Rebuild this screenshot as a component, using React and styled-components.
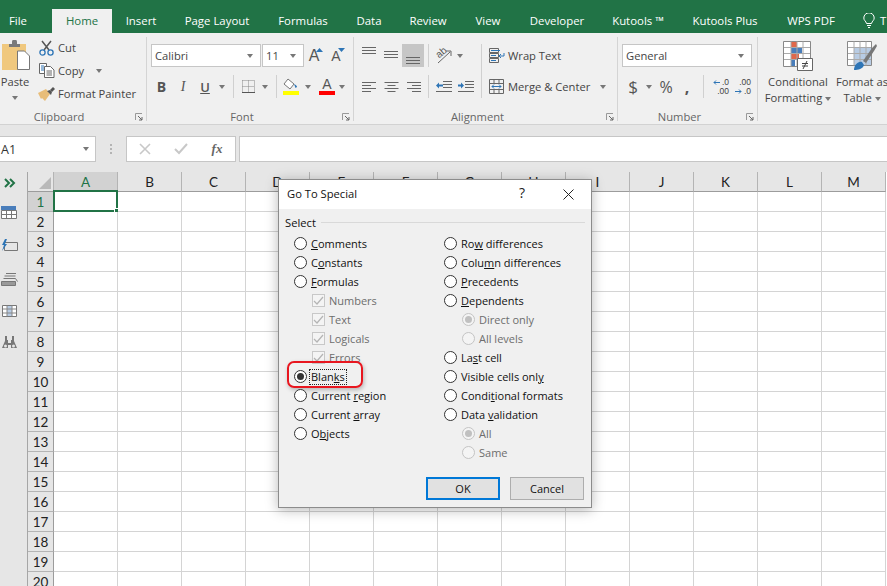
import { Fragment } from 'react';
import styled, { createGlobalStyle } from 'styled-components';

const GlobalStyle = createGlobalStyle`
	html, body {
		margin: 0;
		height: 100%;
		overflow: hidden;
		background: #fff;
	}
	body {
		font-family: 'Open Sans', 'Noto Sans', sans-serif;
		font-size: 11.2px;
		color: #444;
	}
`;

const Page = styled.div`
	width: 887px;
	height: 586px;
	position: relative;
	overflow: hidden;
`;

/* tabs */
const TabBar = styled.div`
	display: flex;
	height: 33px;
	background: #217346;
	white-space: nowrap;
`;
const Tab = styled.div`
	flex: none;
	width: ${(p) => p.$w}px;
	margin-top: 9px;
	display: flex;
	align-items: center;
	justify-content: ${(p) => (p.$start ? 'flex-start' : 'center')};
	padding: 0 ${(p) => p.$right ?? 0}px 1px ${(p) => p.$left ?? 0}px;
	box-sizing: border-box;
	color: ${(p) => (p.$active ? '#217346' : '#fff')};
	background: ${(p) => (p.$active ? '#f0f0f0' : 'transparent')};
	font-size: 11.4px;
`;

/* ribbon */
const Ribbon = styled.div`
	display: flex;
	height: 92px;
	box-sizing: border-box;
	padding-top: 4px;
	background: #f0f0f0;
	border-bottom: 1px solid #d2d2d2;
	overflow: hidden;
`;
const Group = styled.div`
	flex: none;
	position: relative;
	width: ${(p) => p.$w}px;
	height: 84px;
	box-sizing: border-box;
	border-right: ${(p) => (p.$last ? 'none' : '1px solid #d4d4d4')};
	padding: ${(p) => p.$top ?? 7}px 0 0 ${(p) => p.$left ?? 0}px;
	display: flex;
	flex-direction: column;
`;
const GroupBody = styled.div`
	display: flex;
`;
const GroupLabel = styled.div`
	margin-top: auto;
	margin-bottom: -4px;
	padding-right: ${(p) => p.$pad ?? 20}px;
	line-height: 16px;
	text-align: center;
	color: #666;
`;
const Launcher = styled.svg`
	position: absolute;
	right: 3px;
	bottom: 0;
	width: 8px;
	height: 8px;
`;
const Stack = styled.div`
	display: flex;
	flex-direction: column;
	gap: ${(p) => p.$gap ?? 8}px;
`;
const ToolRow = styled.div`
	display: flex;
	align-items: center;
	height: 23px;
`;
const Slot = styled.div`
	flex: none;
	width: ${(p) => p.$w}px;
	height: 23px;
	display: flex;
	align-items: center;
	justify-content: center;
	background: ${(p) => (p.$active ? '#c6c6c6' : 'transparent')};
	color: #555;
`;
const Divider = styled.div`
	width: 1px;
	height: ${(p) => p.$h ?? 23}px;
	background: #d0d0d0;
`;
const Combo = styled.div`
	flex: none;
	width: ${(p) => p.$w}px;
	height: 23px;
	box-sizing: border-box;
	margin-right: 1px;
	padding: 0 7px 0 3px;
	display: flex;
	align-items: center;
	justify-content: space-between;
	background: #fff;
	border: 1px solid #c6c6c6;
	color: #444;
`;
const Caret = styled.span`
	flex: none;
	display: inline-block;
	vertical-align: middle;
	width: 0;
	height: 0;
	border-left: 3.5px solid transparent;
	border-right: 3.5px solid transparent;
	border-top: 4px solid #777;
	margin-left: ${(p) => p.$gap ?? 0}px;
`;
const PasteColumn = styled.div`
	flex: none;
	width: 30px;
	display: flex;
	flex-direction: column;
	align-items: center;
	padding-top: 3px;
	color: #444;
`;
const PasteLabel = styled.div`
	margin: 3px 0 6px;
	line-height: 16px;
`;
const ClipRow = styled.div`
	display: flex;
	align-items: center;
	gap: 3px;
	height: 23px;
	color: #444;
	white-space: nowrap;
`;
const ClipIcon = styled.div`
	flex: none;
	width: 17px;
	display: flex;
	justify-content: center;
`;
const ClipColumn = styled.div`
	margin: -1px 0 0 8px;
`;
const WideTool = styled.div`
	display: flex;
	align-items: center;
	gap: 3px;
	height: 23px;
	color: #444;
	white-space: nowrap;
	padding-left: 7px;
`;
const BigTool = styled.div`
	flex: none;
	width: ${(p) => p.$w}px;
	display: flex;
	flex-direction: column;
	align-items: center;
	color: #444;
	line-height: 16px;
	white-space: nowrap;
`;
const BigIcon = styled.div`
	height: 36px;
	display: flex;
	align-items: center;
`;
const Big = styled.span`
	font-size: ${(p) => p.$size}px;
	font-weight: ${(p) => p.$weight ?? 400};
	font-style: ${(p) => (p.$italic ? 'italic' : 'normal')};
	text-decoration: ${(p) => (p.$under ? 'underline' : 'none')};
	font-family: ${(p) => (p.$serif ? "'Liberation Serif', serif" : 'inherit')};
	color: ${(p) => p.$color ?? '#555'};
`;
const FontStep = styled.div`
	display: flex;
	align-items: flex-start;
	font-family: 'Liberation Sans', sans-serif;
	line-height: 16px;
	color: #555;
`;
const StepArrow = styled.svg`
	width: 7px;
	height: 4px;
	margin-left: -3px;
`;
const Swatch = styled.div`
	display: flex;
	flex-direction: column;
	align-items: center;
	font-family: 'Liberation Sans', sans-serif;
	font-size: 14px;
	line-height: 13px;
	color: #555;
	&::after {
		content: '';
		width: 16px;
		height: 4px;
		background: #ff0000;
	}
`;
const DecimalBox = styled.div`
	display: grid;
	grid-template-columns: 7px 9px;
	align-items: center;
	font-family: 'Liberation Sans', sans-serif;
	font-size: 8.5px;
	line-height: 9px;
	color: #444;
	white-space: nowrap;
`;
const DecimalText = styled.span`
	text-align: right;
	grid-column: ${(p) => (p.$wide ? '1 / span 2' : '2')};
`;

/* formula bar */
const FormulaBand = styled.div`
	height: 47px;
	box-sizing: border-box;
	padding-top: 11px;
	background: #e6e6e6;
	display: flex;
	align-items: flex-start;
`;
const NameBox = styled.div`
	flex: none;
	width: 96px;
	height: 26px;
	box-sizing: border-box;
	padding: 0 6px 0 1px;
	background: #fff;
	border: 1px solid #c6c6c6;
	border-left: none;
	display: flex;
	align-items: center;
	justify-content: space-between;
	color: #333;
	font-size: 12.5px;
`;
const Grip = styled.div`
	flex: none;
	width: 30px;
	height: 26px;
	display: flex;
	flex-direction: column;
	align-items: center;
	justify-content: center;
	gap: 2px;
	& > i {
		width: 2px;
		height: 2px;
		background: #b4b4b4;
	}
`;
const FormulaTools = styled.div`
	flex: none;
	width: 110px;
	height: 26px;
	box-sizing: border-box;
	margin-right: 3px;
	background: #fff;
	border: 1px solid #c6c6c6;
	display: grid;
	grid-template-columns: 36px 36px 36px;
	align-items: center;
	justify-items: center;
`;
const FormulaInput = styled.div`
	flex: 1;
	height: 26px;
	box-sizing: border-box;
	background: #fff;
	border: 1px solid #c6c6c6;
	border-right: none;
`;

/* sheet */
const SheetArea = styled.div`
	display: flex;
	height: 414px;
`;
const SidePanel = styled.div`
	flex: none;
	width: 19px;
	padding: 5px 8px 0 0;
	background: #e6e6e6;
	border-right: 1px solid #a6a6a6;
	display: flex;
	flex-direction: column;
	align-items: center;
`;
const SideIcon = styled.div`
	height: ${(p) => p.$h}px;
	margin-top: ${(p) => p.$top ?? 0}px;
	display: flex;
	align-items: center;
	justify-content: center;
`;
const Grid = styled.div`
	flex: none;
	display: grid;
	grid-template-columns: 26px repeat(13, 64px);
	grid-auto-rows: 20px;
	font-family: 'Lato', 'Liberation Sans', sans-serif;
	font-size: 13.5px;
	color: #222;
`;
const Corner = styled.div`
	background: #e6e6e6;
	border-right: 1px solid #b4b4b4;
	border-bottom: 1px solid #9c9c9c;
	box-sizing: border-box;
	display: flex;
	align-items: flex-end;
	justify-content: flex-end;
	padding: 0 2px 2px 0;
`;
const ColHead = styled.div`
	box-sizing: border-box;
	background: ${(p) => (p.$active ? '#d2d2d2' : '#e6e6e6')};
	color: ${(p) => (p.$active ? '#217346' : '#222')};
	border-right: 1px solid #b4b4b4;
	border-bottom: 1px solid #9c9c9c;
	display: flex;
	align-items: center;
	justify-content: center;
`;
const RowHead = styled.div`
	box-sizing: border-box;
	background: ${(p) => (p.$active ? '#d2d2d2' : '#e6e6e6')};
	color: ${(p) => (p.$active ? '#217346' : '#222')};
	border-right: 1px solid #9c9c9c;
	border-bottom: 1px solid #b4b4b4;
	display: flex;
	align-items: center;
	justify-content: center;
`;
const Cell = styled.div`
	box-sizing: border-box;
	background: #fff;
	border-right: 1px solid #d4d4d4;
	border-bottom: 1px solid #d4d4d4;
	position: relative;
`;
const Selection = styled.div`
	position: absolute;
	left: -1px;
	top: -2px;
	right: -1px;
	bottom: -1px;
	border: 2px solid #217346;
	&::after {
		content: '';
		position: absolute;
		right: -4px;
		bottom: -4px;
		width: 5px;
		height: 5px;
		background: #217346;
		border: 1px solid #fff;
		border-width: 1px 0 0 1px;
	}
`;

/* dialog */
const Dialog = styled.div`
	position: absolute;
	left: 278px;
	top: 179px;
	width: 314px;
	height: 329px;
	box-sizing: border-box;
	background: #f0f0f0;
	border: 1px solid #8c8c8c;
	box-shadow: 0 2px 12px rgba(0, 0, 0, 0.28);
	color: #000;
	display: flex;
	flex-direction: column;
	font-size: 11px;
`;
const TitleBar = styled.div`
	height: 29px;
	box-sizing: border-box;
	flex: none;
	background: #fff;
	display: flex;
	align-items: center;
	padding: 0 0 1px 8px;
	color: #111;
	font-size: 11.2px;
`;
const TitleText = styled.div`
	flex: 1;
	padding-bottom: 1px;
`;
const TitleButton = styled.div`
	width: 46px;
	display: flex;
	justify-content: center;
	align-items: center;
	font-size: 14px;
	color: #222;
`;
const HelpMark = styled.span`
	margin-top: -3px;
`;
const Legend = styled.div`
	display: flex;
	align-items: center;
	gap: 5px;
	height: 15px;
	margin: 6px 6px 4px 6px;
	color: #111;
	font-size: 11.2px;
	&::after {
		content: '';
		flex: 1;
		height: 1px;
		background: #d9d9d9;
	}
`;
const Options = styled.div`
	display: grid;
	grid-template-columns: 150px 1fr;
	padding-left: 15px;
`;
const OptionColumn = styled.div`
	display: flex;
	flex-direction: column;
`;
const OptionRow = styled.div`
	position: relative;
	display: flex;
	align-items: center;
	gap: 4px;
	height: 19px;
	padding-left: ${(p) => (p.$sub ? 18 : 0)}px;
	color: ${(p) => (p.$sub ? '#6d6d6d' : '#111')};
	white-space: nowrap;
`;
const Radio = styled.span`
	flex: none;
	width: 13px;
	height: 13px;
	box-sizing: border-box;
	border-radius: 50%;
	background: ${(p) => (p.$sub ? '#f4f4f4' : '#fff')};
	border: 1px solid ${(p) => (p.$sub ? '#c4c4c4' : '#333')};
	display: flex;
	align-items: center;
	justify-content: center;
	&::after {
		content: '';
		display: ${(p) => (p.$on ? 'block' : 'none')};
		width: 7px;
		height: 7px;
		border-radius: 50%;
		background: ${(p) => (p.$sub ? '#c0c0c0' : '#333')};
	}
`;
const Check = styled.span`
	flex: none;
	width: 13px;
	height: 13px;
	box-sizing: border-box;
	border: 1px solid #c8c8c8;
	background: #f4f4f4;
	display: flex;
	align-items: center;
	justify-content: center;
`;
const FocusLabel = styled.span`
	outline: 1px dotted #222;
	outline-offset: 0;
	margin-left: -1px;
	padding: 0 1px;
	line-height: 14px;
`;
const Callout = styled.div`
	position: absolute;
	left: -7px;
	top: -6px;
	width: 76px;
	height: 27px;
	box-sizing: border-box;
	border: 2px solid #e8161f;
	border-radius: 7px;
	box-shadow: 1px 2px 4px rgba(0, 0, 0, 0.25);
	pointer-events: none;
`;
const Actions = styled.div`
	display: flex;
	justify-content: flex-end;
	gap: 10px;
	margin-top: 15px;
	padding-right: 7px;
`;
const Button = styled.div`
	width: 74px;
	height: 23px;
	box-sizing: border-box;
	padding-bottom: 1px;
	background: #e1e1e1;
	border: ${(p) => (p.$primary ? '2px solid #0078d7' : '1px solid #adadad')};
	display: flex;
	align-items: center;
	justify-content: center;
	color: #111;
`;

const Launch = () => (
	<Launcher viewBox="0 0 8 8">
		<path d="M0.5 7V0.5H7" fill="none" stroke="#999" />
		<path d="M3 3L7 7M7 4V7H4" fill="none" stroke="#666" />
	</Launcher>
);

const Line = ({ d, c = '#666', w = 1 }) => <path d={d} fill="none" stroke={c} strokeWidth={w} />;

const PasteIcon = () => (
	<svg width="30" height="31" viewBox="0 0 30 31">
		<rect x="2" y="4" width="24" height="26" fill="#f0c87e" />
		<path d="M9 4h3V2a2 2 0 0 1 5 0v2h3v3H9z" fill="#7a7a7a" />
		<path d="M17.500 11h7l5 5v13.500h-12z" fill="#fff" stroke="#777" />
	</svg>
);
const CutIcon = () => (
	<svg width="15" height="16" viewBox="0 0 15 16">
		<Line d="M3 1L10 10M12 1L5 10" c="#555" w="1.5" />
		<circle cx="3.5" cy="12.5" r="2.6" fill="none" stroke="#2e75b6" strokeWidth="1.3" />
		<circle cx="11.5" cy="12.5" r="2.6" fill="none" stroke="#2e75b6" strokeWidth="1.3" />
	</svg>
);
const CopyIcon = () => (
	<svg width="16" height="15" viewBox="0 0 16 15">
		<path d="M.5.5h7v10h-7z" fill="#fff" stroke="#666" />
		<path d="M5.500 3.500h6l3.500 3.500v7.500h-9.500z" fill="#fff" stroke="#666" />
		<Line d="M2 3h3M2 5h3M2 7h3" c="#2e75b6" />
		<Line d="M7.500 8h5.500M7.500 10h5.500M7.500 12h5.500" c="#666" />
	</svg>
);
const BrushIcon = () => (
	<svg width="17" height="14" viewBox="0 0 17 14">
		<path d="M0 6L8 2l4 5-5 7-3-3-1 1z" fill="#e8bd79" />
		<path d="M9 4l3-1 2 2-1 3z" fill="#555" />
		<path d="M12 3l3-3 2 2-3 3z" fill="#555" />
	</svg>
);
const GrowFont = ({ up }) => (
	<FontStep>
		<Big $size={up ? 16 : 14}>A</Big>
		<StepArrow viewBox="0 0 7 4">
			<path d={up ? 'M0 4l3.500-4 3.500 4z' : 'M0 0h7L3.500 4z'} fill="#2e75b6" />
		</StepArrow>
	</FontStep>
);
const BorderIcon = () => (
	<svg width="13" height="13" viewBox="0 0 13 13">
		<path d="M.5.500h12v12M.5.500v12M6.500.500v12M.5 6.500h12" fill="none" stroke="#888" strokeDasharray="1 1" />
		<path d="M0 12.500h13" stroke="#555" />
	</svg>
);
const FillIcon = () => (
	<svg width="18" height="17" viewBox="0 0 18 17">
		<path d="M6 1l6 5-4 5-6-5z" fill="#fff" stroke="#777" />
		<path d="M12 6c2 1 3 2 3 3l-1.500 1z" fill="#2e75b6" />
		<rect x="1" y="13" width="16" height="4" fill="#ffff00" />
	</svg>
);
const LinesIcon = ({ rows, lens, side = 'l' }) => (
	<svg width="15" height="23" viewBox="0 0 15 23">
		{rows.map((y, i) => {
			const len = lens ? lens[i] : 14;
			const x = side === 'r' ? 15 - len : side === 'c' ? (15 - len) / 2 : 0;
			return <path key={y} d={`M${x} ${y + 0.5}h${len}`} stroke="#666" />;
		})}
	</svg>
);
const OrientIcon = () => (
	<svg width="22" height="23" viewBox="0 0 22 23">
		<text x="3" y="12" fontSize="10" fill="#555" transform="rotate(-40 8 9)" fontFamily="Liberation Sans, sans-serif">ab</text>
		<Line d="M5 19L17 8M13 7h5v5" c="#666" />
	</svg>
);
const IndentIcon = ({ out }) => (
	<svg width="16" height="11" viewBox="0 0 16 11">
		<Line d="M7 .5h9M7 3.500h9M7 6.500h9M0 10.500h16" />
		<path d={out ? 'M0 4.500l3-3v2h4v2H3v2z' : 'M6 4.500l-3-3v2H0v2h3v2z'} fill="#2e75b6" />
	</svg>
);
const WrapIcon = () => (
	<svg width="16" height="15" viewBox="0 0 16 15">
		<path d="M.5.500h9v4h-9zM.5 5.500h9v4h-9zM.5 10.500h9v4h-9z" fill="none" stroke="#666" />
		<Line d="M2 2.500h9M2 7.500h5M2 12.500h5" c="#2e75b6" />
		<Line d="M15 5v3h-5M12 6l-2 2 2 2" c="#2e75b6" />
	</svg>
);
const MergeIcon = () => (
	<svg width="16" height="15" viewBox="0 0 16 15">
		<path d="M.5.500h14v14H.5zM.5 4.500h14M.5 10.500h14M5 .5v4M10 .5v4M5 10.500v4M10 10.500v4" fill="none" stroke="#666" />
		<Line d="M3 7.500h9M5 5.500l-2 2 2 2M10 5.500l2 2-2 2" c="#2e75b6" />
	</svg>
);
const DecimalIcon = ({ more }) => (
	<DecimalBox>
		{more ? (
			<>
				<DecimalText $wide>.00</DecimalText>
				<svg width="7" height="7" viewBox="0 0 7 7">
					<path d="M0 3.500h6M4 1.500l2 2-2 2" fill="none" stroke="#2e75b6" />
				</svg>
				<DecimalText>.0</DecimalText>
			</>
		) : (
			<>
				<svg width="7" height="7" viewBox="0 0 7 7">
					<path d="M1 3.500h6M3 1.500l-2 2 2 2" fill="none" stroke="#2e75b6" />
				</svg>
				<DecimalText>.0</DecimalText>
				<DecimalText $wide>.00</DecimalText>
			</>
		)}
	</DecimalBox>
);
const ConditionalIcon = () => (
	<svg width="30" height="30" viewBox="0 0 30 30">
		<path d="M.5.500h27v25H.5z" fill="#fff" stroke="#888" />
		<rect x="8" y="1" width="6" height="5" fill="#e0684a" />
		<rect x="8" y="7" width="11" height="5" fill="#4a7ebb" />
		<rect x="8" y="13" width="8" height="5" fill="#e0684a" />
		<rect x="8" y="19" width="4" height="6" fill="#4a7ebb" />
		<Line d="M8 .5v25M14 .5v25M20 .5v25M1 6.500h26M1 12.500h26M1 18.500h26" c="#aaa" />
		<path d="M14.500 17.500h15v12h-15z" fill="#fff" stroke="#666" />
		<Line d="M19 22.500h6M19 25h6M24 20l-4 8" c="#444" />
	</svg>
);
const TableIcon = () => (
	<svg width="30" height="30" viewBox="0 0 30 30">
		<path d="M.5.500h24v24H.5z" fill="#fff" stroke="#888" />
		<rect x="7" y="7" width="17" height="17" fill="#b8cce4" />
		<Line d="M7 .5v24M13 .5v24M19 .5v24M1 6.500h23M1 12.500h23M1 18.500h23" c="#aaa" />
		<path d="M7 29c0-5 4-9 8-8l2 3c-1 4-6 5-10 5z" fill="#2e75b6" />
		<path d="M16 20l9-13 4-4 1 2-3 5-8 12z" fill="#777" />
	</svg>
);

const SIDE_ICONS = [
	{
		h: 33,
		top: 7,
		svg: (
			<svg width="17" height="13" viewBox="0 0 17 13">
				<rect x="0" y="0" width="15" height="4" fill="#4a7ebb" />
				<path d="M.5 4.500h15v8H.5zM5.500 4.500v8M10.500 4.500v8M.5 8.500h15" fill="#fff" stroke="#777" />
			</svg>
		),
	},
	{
		h: 33,
		svg: (
			<svg width="17" height="13" viewBox="0 0 17 13">
				<path d="M3.500 3.500h13v8h-13z" fill="#e6e6e6" stroke="#777" />
				<path d="M4 0L1 6h2l-2 6 5-7H4l2-5z" fill="#2e75b6" />
			</svg>
		),
	},
	{
		h: 34,
		svg: (
			<svg width="17" height="13" viewBox="0 0 17 13">
				<path d="M.5 8.500h14v4H.5z" fill="#999" stroke="#777" />
				<path d="M2.500 5.500h12l2 3M3.500 3h11M5 .5h10" fill="none" stroke="#777" />
			</svg>
		),
	},
	{
		h: 29,
		svg: (
			<svg width="15" height="12" viewBox="0 0 15 12">
				<path d="M.5.500h14v11H.5z" fill="#fff" stroke="#777" />
				<rect x="5" y="1" width="5" height="10" fill="#b8cce4" />
				<path d="M5 .5v11M10 .5v11M1 4h13M1 8h13" stroke="#888" fill="none" />
			</svg>
		),
	},
	{
		h: 35,
		svg: (
			<svg width="15" height="13" viewBox="0 0 15 13">
				<path d="M3 0h2v4h1v3h3V4h1V0h2v5l3 7H9V9H6v3H0l3-7z" fill="#777" />
				<circle cx="3.500" cy="10" r="1.500" fill="#e6e6e6" />
				<circle cx="11.500" cy="10" r="1.500" fill="#e6e6e6" />
			</svg>
		),
	},
];

const TABS = [
	['Home', 60],
	['Insert', 58],
	['Page Layout', 94],
	['Formulas', 78],
	['Data', 54],
	['Review', 64],
	['View', 56],
	['Developer', 82],
	['Kutools ™', 80],
	['Kutools Plus', 94],
	['WPS PDF', 78],
];

const COLUMNS = 'ABCDEFGHIJKLM'.split('');
const ROWS = Array.from({ length: 20 }, (_, i) => i + 1);

const LEFT_OPTIONS = [
	{ label: '&Comments' },
	{ label: 'C&onstants' },
	{ label: '&Formulas' },
	{ label: 'Numbers', check: true },
	{ label: 'Text', check: true },
	{ label: 'Logicals', check: true },
	{ label: 'Errors', check: true },
	{ label: 'Blan&ks', selected: true },
	{ label: 'Current &region' },
	{ label: 'Current &array' },
	{ label: 'O&bjects' },
];

const RIGHT_OPTIONS = [
	{ label: 'Ro&w differences' },
	{ label: 'Colu&mn differences' },
	{ label: '&Precedents' },
	{ label: '&Dependents' },
	{ label: 'Direct only', sub: true, on: true },
	{ label: 'All levels', sub: true },
	{ label: 'La&st cell' },
	{ label: 'Visible cells onl&y' },
	{ label: 'Condi&tional formats' },
	{ label: 'Data &validation' },
	{ label: 'All', sub: true, on: true },
	{ label: 'Same', sub: true },
];

// "&" marks the letter that gets the access key underline
const Mnemonic = ({ text }) => {
	const at = text.indexOf('&');
	if (at < 0) return text;
	return (
		<>
			{text.slice(0, at)}
			<u>{text[at + 1]}</u>
			{text.slice(at + 2)}
		</>
	);
};

const Option = ({ label, check, sub, on, selected }) => (
	<OptionRow $sub={check || sub}>
		{check ? (
			<Check>
				<svg width="11" height="11" viewBox="0 0 11 11">
					<path d="M1 6l3 3 6-7" fill="none" stroke="#b4b4b4" strokeWidth="1.2" />
				</svg>
			</Check>
		) : (
			<Radio $sub={sub} $on={on || selected} />
		)}
		{selected ? (
			<FocusLabel>
				<Mnemonic text={label} />
			</FocusLabel>
		) : (
			<span>
				<Mnemonic text={label} />
			</span>
		)}
		{selected && <Callout />}
	</OptionRow>
);

const App = () => {
	return (
		<Page>
			<GlobalStyle />
			<TabBar>
				<Tab $w={52} $right={16}>
					File
				</Tab>
				{TABS.map(([name, w]) => (
					<Tab key={name} $w={w} $active={name === 'Home'}>
						{name}
					</Tab>
				))}
				<Tab $w={30} $left={8}>
					<svg width="12" height="15" viewBox="0 0 12 15">
						<path d="M3.500 10.500C3 8 .8 7.500.8 5A5.200 5.200 0 0 1 11.200 5c0 2.500-2.200 3-2.700 5.500zM4 12.500h4M5 14.500h2" fill="none" stroke="#fff" />
					</svg>
				</Tab>
				<Tab $w={7} $start>
					T
				</Tab>
			</TabBar>

			<Ribbon>
				<Group $w={147} $top={0}>
					<GroupBody>
						<PasteColumn>
							<PasteIcon />
							<PasteLabel>Paste</PasteLabel>
							<Caret />
						</PasteColumn>
						<ClipColumn>
							<ClipRow>
								<ClipIcon>
									<CutIcon />
								</ClipIcon>
								Cut
							</ClipRow>
							<ClipRow>
								<ClipIcon>
									<CopyIcon />
								</ClipIcon>
								Copy
								<Caret $gap={9} />
							</ClipRow>
							<ClipRow>
								<ClipIcon>
									<BrushIcon />
								</ClipIcon>
								Format Painter
							</ClipRow>
						</ClipColumn>
					</GroupBody>
					<GroupLabel $pad={28}>Clipboard</GroupLabel>
					<Launch />
				</Group>

				<Group $w={207} $left={4}>
					<Stack>
						<ToolRow>
							<Combo $w={110}>
								Calibri
								<Caret />
							</Combo>
							<Combo $w={42}>
								11
								<Caret />
							</Combo>
							<Slot $w={22}>
								<GrowFont up />
							</Slot>
							<Slot $w={22}>
								<GrowFont />
							</Slot>
						</ToolRow>
						<ToolRow>
							<Slot $w={21}>
								<Big $size={14} $weight={700}>B</Big>
							</Slot>
							<Slot $w={22}>
								<Big $size={14} $italic $serif>I</Big>
							</Slot>
							<Slot $w={22}>
								<Big $size={13} $under $weight={600}>U</Big>
							</Slot>
							<Slot $w={12}>
								<Caret />
							</Slot>
							<Slot $w={10}>
								<Divider />
							</Slot>
							<Slot $w={20}>
								<BorderIcon />
							</Slot>
							<Slot $w={13}>
								<Caret />
							</Slot>
							<Slot $w={10}>
								<Divider />
							</Slot>
							<Slot $w={20}>
								<FillIcon />
							</Slot>
							<Slot $w={13}>
								<Caret />
							</Slot>
							<Slot $w={3} />
							<Slot $w={20}>
								<Swatch>A</Swatch>
							</Slot>
							<Slot $w={10}>
								<Caret />
							</Slot>
						</ToolRow>
					</Stack>
					<GroupLabel>Font</GroupLabel>
					<Launch />
				</Group>

				<Group $w={264} $left={4}>
					<GroupBody>
						<Stack>
							<ToolRow>
								<Slot $w={22}>
									<LinesIcon rows={[3, 6, 9]} />
								</Slot>
								<Slot $w={22}>
									<LinesIcon rows={[7, 10, 13]} />
								</Slot>
								<Slot $w={22} $active>
									<LinesIcon rows={[13, 16, 19]} />
								</Slot>
								<Slot $w={9}>
									<Divider />
								</Slot>
								<Slot $w={22}>
									<OrientIcon />
								</Slot>
								<Slot $w={2} />
								<Caret />
							</ToolRow>
							<ToolRow>
								<Slot $w={22}>
									<LinesIcon rows={[7, 10, 13, 16]} lens={[14, 9, 14, 9]} />
								</Slot>
								<Slot $w={22}>
									<LinesIcon rows={[7, 10, 13, 16]} lens={[14, 8, 14, 8]} side="c" />
								</Slot>
								<Slot $w={22}>
									<LinesIcon rows={[7, 10, 13, 16]} lens={[14, 9, 14, 9]} side="r" />
								</Slot>
								<Slot $w={9}>
									<Divider />
								</Slot>
								<Slot $w={22}>
									<IndentIcon out />
								</Slot>
								<Slot $w={22}>
									<IndentIcon />
								</Slot>
							</ToolRow>
						</Stack>
						<Slot $w={4} />
						<Divider $h={54} />
						<Stack>
							<WideTool>
								<WrapIcon />
								Wrap Text
							</WideTool>
							<WideTool>
								<MergeIcon />
								Merge & Center
								<Caret $gap={7} />
							</WideTool>
						</Stack>
					</GroupBody>
					<GroupLabel>Alignment</GroupLabel>
					<Launch />
				</Group>

				<Group $w={140} $left={4}>
					<Stack>
						<ToolRow>
							<Combo $w={130}>
								General
								<Caret />
							</Combo>
						</ToolRow>
						<ToolRow>
							<Slot $w={22}>
								<Big $size={17}>$</Big>
							</Slot>
							<Slot $w={10}>
								<Caret />
							</Slot>
							<Slot $w={24}>
								<Big $size={16}>%</Big>
							</Slot>
							<Slot $w={18}>
								<Big $size={16} $weight={700}>,</Big>
							</Slot>
							<Slot $w={14}>
								<Divider />
							</Slot>
							<Slot $w={22}>
								<DecimalIcon />
							</Slot>
							<Slot $w={22}>
								<DecimalIcon more />
							</Slot>
						</ToolRow>
					</Stack>
					<GroupLabel>Number</GroupLabel>
					<Launch />
				</Group>

				<Group $w={130} $last $top={1} $left={4}>
					<GroupBody>
						<BigTool $w={72}>
							<BigIcon>
								<ConditionalIcon />
							</BigIcon>
							<span>Conditional</span>
							<span>
								Formatting <Caret />
							</span>
						</BigTool>
						<BigTool $w={56}>
							<BigIcon>
								<TableIcon />
							</BigIcon>
							<span>Format as</span>
							<span>
								Table <Caret />
							</span>
						</BigTool>
					</GroupBody>
				</Group>
			</Ribbon>

			<FormulaBand>
				<NameBox>
					A1
					<Caret />
				</NameBox>
				<Grip>
					<i />
					<i />
					<i />
				</Grip>
				<FormulaTools>
					<svg width="12" height="12" viewBox="0 0 12 12">
						<path d="M1 1l10 10M11 1L1 11" stroke="#c8c8c8" strokeWidth="1.6" />
					</svg>
					<svg width="14" height="12" viewBox="0 0 14 12">
						<path d="M1 6l4 4 8-9" fill="none" stroke="#c8c8c8" strokeWidth="2" />
					</svg>
					<Big $size={13} $italic $serif $weight={700} $color="#666">fx</Big>
				</FormulaTools>
				<FormulaInput />
			</FormulaBand>

			<SheetArea>
				<SidePanel>
					<SideIcon $h={12}>
						<svg width="12" height="10" viewBox="0 0 12 10">
							<path d="M1 1l4 4-4 4M6 1l4 4-4 4" fill="none" stroke="#217346" strokeWidth="2" />
						</svg>
					</SideIcon>
					{SIDE_ICONS.map((item, i) => (
						<SideIcon key={i} $h={item.h} $top={item.top}>
							{item.svg}
						</SideIcon>
					))}
				</SidePanel>
				<Grid>
					<Corner>
						<svg width="12" height="12" viewBox="0 0 12 12">
							<path d="M12 0v12H0z" fill="#b9b9b9" />
						</svg>
					</Corner>
					{COLUMNS.map((c) => (
						<ColHead key={c} $active={c === 'A'}>
							{c}
						</ColHead>
					))}
					{ROWS.map((r) => (
						<Fragment key={r}>
							<RowHead $active={r === 1}>{r}</RowHead>
							{COLUMNS.map((c) => (
								<Cell key={c}>{r === 1 && c === 'A' && <Selection />}</Cell>
							))}
						</Fragment>
					))}
				</Grid>
			</SheetArea>

			<Dialog>
				<TitleBar>
					<TitleText>Go To Special</TitleText>
					<TitleButton>
						<HelpMark>?</HelpMark>
					</TitleButton>
					<TitleButton>
						<svg width="11" height="11" viewBox="0 0 11 11">
							<path d="M.5.500l10 10M10.500.500l-10 10" stroke="#222" />
						</svg>
					</TitleButton>
				</TitleBar>
				<Legend>Select</Legend>
				<Options>
					<OptionColumn>
						{LEFT_OPTIONS.map((o) => (
							<Option key={o.label} {...o} />
						))}
					</OptionColumn>
					<OptionColumn>
						{RIGHT_OPTIONS.map((o) => (
							<Option key={o.label} {...o} />
						))}
					</OptionColumn>
				</Options>
				<Actions>
					<Button $primary>OK</Button>
					<Button>Cancel</Button>
				</Actions>
			</Dialog>
		</Page>
	);
};

export default App;
